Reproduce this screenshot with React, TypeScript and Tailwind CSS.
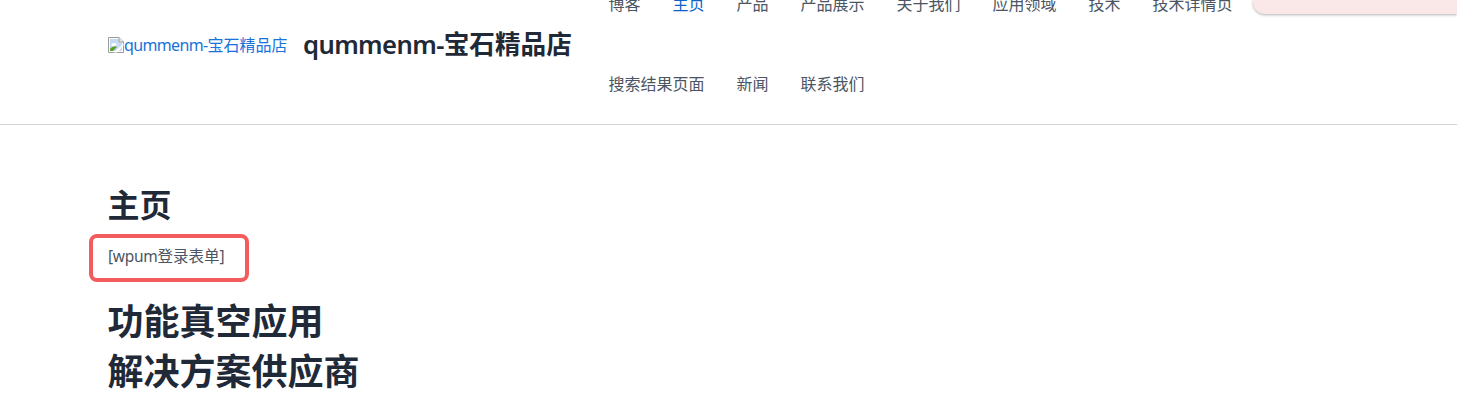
const topNav = ['博客', '主页', '产品', '产品展示', '关于我们', '应用领域', '技术', '技术详情页'];
const bottomNav = ['搜索结果页面', '新闻', '联系我们'];

function BrokenImage() {
  return (
    <svg width="16" height="16" viewBox="0 0 16 16" className="shrink-0">
      <path d="M0.5 0.5H11L15.5 5V15.5H0.5Z" fill="#fff" stroke="#9a9a9a" />
      <path d="M2 2H10.5V5.5H14V14H2Z" fill="#c5d8f5" />
      <path d="M3 8C5 5.5 7 5.5 9 7.5L6 10Z" fill="#fff" />
      <path d="M2 14V12C4 9.5 7 8.5 9 10L5 14Z" fill="#5aa02c" />
      <path d="M5.5 15.5L15.5 6.5V9L9 15.5Z" fill="#fff" />
      <path d="M11 0.5V5H15.5" fill="#e8e8e8" stroke="#9a9a9a" />
    </svg>
  );
}

function NavRow({ items }: { items: string[] }) {
  return (
    <ul className="flex h-20 items-center gap-8">
      {items.map((item) => (
        <li key={item} className={item === '主页' ? 'text-[#0b63ce]' : 'text-[#4b5563]'}>
          {item}
        </li>
      ))}
    </ul>
  );
}

export default function App() {
  return (
    <div className="relative h-[417px] overflow-hidden bg-white font-['Noto_Sans','Noto_Sans_CJK_SC',sans-serif] text-base text-[#1f2937]">
      <header className="-mt-9 flex h-[161px] items-center border-b border-[#d4d4d8] pl-[108px]">
        <a className="flex w-[195px] items-center pt-0.5 text-base text-[#1a73d9]">
          <BrokenImage />
          <span>
            <span className="tracking-[-0.65px]">qummenm-</span>宝石精品店
          </span>
        </a>
        <div className="w-[305.5px] pt-0.5 text-[25.6px] font-semibold text-[#1f2937]">
          <span className="tracking-[-0.6px]">qummenm-</span>宝石精品店
        </div>
        <nav>
          <NavRow items={topNav} />
          <NavRow items={bottomNav} />
        </nav>
      </header>

      <div className="absolute right-0 top-0 h-[14px] w-[204px] rounded-bl-xl bg-[#fae8e8] shadow-[0_1px_3px_rgba(0,0,0,0.3)]" />

      <main className="pl-[108px] pt-[57px]">
        <h2 className="-ml-[0.5px] text-[32px] leading-[46px] font-bold text-[#1f2937]">主页</h2>
        <div className="-ml-[19px] mt-[6px] flex h-[48px] w-[160px] items-center rounded-lg border-4 border-[#f25c5c] pb-0.5 pl-[15px] text-[15.5px] text-[#4b5563]">
          <span>
            <span className="tracking-[-0.3px]">[wpum</span>登录表单]
          </span>
        </div>
        <h1 className="-ml-[0.5px] mt-4 -translate-y-px text-[36px] leading-[50px] font-bold text-[#1f2937]">
          功能真空应用
          <br />
          解决方案供应商
        </h1>
      </main>
    </div>
  );
}
